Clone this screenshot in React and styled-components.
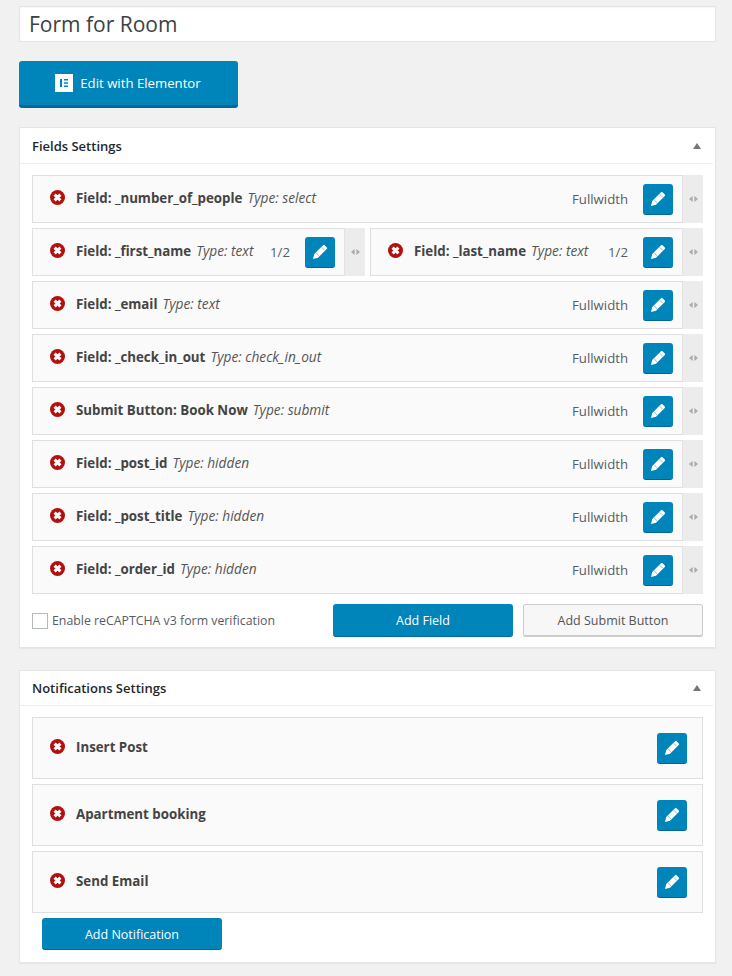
import React from "react";
import styled, { createGlobalStyle } from "styled-components";

const GlobalStyle = createGlobalStyle`
  html, body {
    margin: 0;
    padding: 0;
    background: #f1f1f1;
    font-family: "Open Sans", "Liberation Sans", sans-serif;
    font-size: 13px;
    color: #444;
  }
  * { box-sizing: border-box; }
`;

const Page = styled.div`
  width: 732px;
  height: 976px;
  overflow: hidden;
  padding: 6px 16px 0 19px;
`;

const TitleBox = styled.div`
  height: 36px;
  background: #fff;
  border: 1px solid #e4e4e4;
  box-shadow: inset 0 1px 2px rgba(0, 0, 0, 0.04);
  padding-left: 9px;
  font-size: 21px;
  line-height: 34px;
  color: #3c4146;
`;

const ElementorButton = styled.div`
  margin-top: 19px;
  width: 219px;
  height: 47px;
  background: #0085ba;
  border-bottom: 3px solid #006799;
  border-radius: 3px;
  display: flex;
  align-items: center;
  justify-content: center;
  gap: 7px;
  color: #fff;
  font-size: 13.2px;
  padding-bottom: 1px;
  padding-right: 1px;
`;

const Panel = styled.section`
  margin-top: ${(p) => p.$top}px;
  height: ${(p) => p.$height}px;
  background: #fff;
  border: 1px solid #e5e5e5;
  box-shadow: 0 1px 1px rgba(0, 0, 0, 0.04);
`;

const PanelHeader = styled.header`
  height: ${(p) => p.$height}px;
  margin-right: 2px;
  padding: 0 12px;
  display: flex;
  align-items: center;
  justify-content: space-between;
  border-bottom: 1px solid #eee;
  font-size: 13px;
  font-weight: 600;
  color: #23282d;
`;

const Caret = styled.span`
  width: 0;
  height: 0;
  margin-right: 0;
  border-left: 4px solid transparent;
  border-right: 4px solid transparent;
  border-bottom: 6px solid #72777c;
`;

const PanelBody = styled.div`
  padding: 11px 12px 0;
  display: flex;
  flex-direction: column;
  gap: ${(p) => p.$gap}px;
`;

const HalfRow = styled.div`
  display: grid;
  grid-template-columns: 333px 333px;
  gap: 5px;
`;

const FieldRow = styled.div`
  height: ${(p) => p.$height}px;
  background: #fafafa;
  border: 1px solid #dfdfdf;
  border-right: ${(p) => (p.$plain ? "1px solid #dfdfdf" : "0")};
  display: flex;
  align-items: center;
  padding-left: 17px;
`;

const ErrorIcon = styled.svg`
  width: 15px;
  height: 15px;
  flex: none;
  margin-top: -3px;
  margin-right: ${(p) => p.$space || 11}px;
`;

const FieldName = styled.strong`
  font-weight: 700;
  font-size: 13.3px;
  color: #444;
  margin-top: -3px;
  white-space: nowrap;
`;

const FieldType = styled.em`
  font-style: italic;
  font-size: 13.7px;
  color: #555;
  margin-top: -3px;
  margin-left: 5px;
  white-space: nowrap;
`;

const WidthLabel = styled.span`
  margin-left: auto;
  margin-right: 15px;
  font-size: 13.2px;
  color: #555d66;
`;

const EditButton = styled.div`
  width: 30px;
  height: 31px;
  flex: none;
  margin-right: ${(p) => p.$right}px;
  margin-left: ${(p) => (p.$auto ? "auto" : "0")};
  margin-top: ${(p) => (p.$auto ? "1px" : "0")};
  background: #0085ba;
  border-bottom: 1px solid #006799;
  border-radius: 3px;
  display: flex;
  align-items: center;
  justify-content: center;
`;

const Handle = styled.div`
  width: 21px;
  height: calc(100% + 2px);
  flex: none;
  background: #ececec;
  border-left: 1px solid #e2e2e2;
  color: #aaa;
  display: flex;
  align-items: center;
  justify-content: center;
`;

const Footer = styled.div`
  margin-top: 5px;
  display: flex;
  align-items: center;
`;

const CheckBox = styled.span`
  width: 16px;
  height: 16px;
  background: #fff;
  border: 1px solid #b4b9be;
  flex: none;
  margin-right: 4px;
`;

const CheckLabel = styled.span`
  font-size: 12.33px;
  color: #555d66;
  margin-right: auto;
`;

const ActionButton = styled.div`
  width: 180px;
  height: ${(p) => p.$height || 33}px;
  margin-left: ${(p) => p.$left || 0}px;
  padding-top: ${(p) => (p.$height ? 1 : 0)}px;
  border-radius: 3px;
  display: flex;
  align-items: center;
  justify-content: center;
  font-size: 12.5px;
  background: ${(p) => (p.$secondary ? "#f7f7f7" : "#0085ba")};
  color: ${(p) => (p.$secondary ? "#555" : "#fff")};
  border: ${(p) => (p.$secondary ? "1px solid #ccc" : "0")};
  border-bottom: ${(p) => (p.$secondary ? "2px solid #ccc" : "1px solid #006799")};
`;

const Error = ({ space }) => (
  <ErrorIcon viewBox="0 0 15 15" $space={space}>
    <circle cx="7.5" cy="7.5" r="7.5" fill="#b30f0f" />
    <path d="M4.6 4.6l5.8 5.8M10.4 4.6l-5.8 5.8" stroke="#fff" strokeWidth="3" />
  </ErrorIcon>
);

const Pencil = () => (
  <svg width="16" height="16" viewBox="0 0 16 16">
    <path d="M11 1.2c.5-.4 1.100-.4 1.500 0l2.300 2.300c.4.400.4 1 0 1.500L6 13.800 1 15l1.200-5z" fill="#fff" />
    <path d="M9.600 3.200l3.200 3.200M4.200 9l2.800 2.800" stroke="#4aa5cc" strokeWidth="0.7" />
  </svg>
);

const Arrows = () => (
  <svg width="9" height="6" viewBox="0 0 9 6">
    <path d="M0 3l3.600-3v6zM9 3l-3.600-3v6z" fill="#aaa" />
  </svg>
);

const Field = ({ name, type, width }) => (
  <FieldRow $height={48}>
    <Error />
    <FieldName>{name}</FieldName>
    <FieldType>Type: {type}</FieldType>
    <WidthLabel>{width}</WidthLabel>
    <EditButton $right={9}><Pencil /></EditButton>
    <Handle><Arrows /></Handle>
  </FieldRow>
);

const Notification = ({ name }) => (
  <FieldRow $height={62} $plain>
    <Error />
    <FieldName>{name}</FieldName>
    <EditButton $auto $right={15}><Pencil /></EditButton>
  </FieldRow>
);

const App = () => (
  <Page>
    <GlobalStyle />
    <TitleBox>Form for Room</TitleBox>
    <ElementorButton>
      <svg width="18" height="18" viewBox="0 0 18 18">
        <rect width="18" height="18" fill="#fff" />
        <path d="M5 5h2v8H5zM9 5h4v1.600H9zM9 8.200h4v1.600H9zM9 11.400h4V13H9z" fill="#0085ba" />
      </svg>
      Edit with Elementor
    </ElementorButton>

    <Panel $top={19} $height={521}>
      <PanelHeader $height={36}>
        Fields Settings
        <Caret />
      </PanelHeader>
      <PanelBody $gap={5}>
        <Field name="Field: _number_of_people" type="select" width="Fullwidth" />
        <HalfRow>
          <Field name="Field: _first_name" type="text" width="1/2" />
          <Field name="Field: _last_name" type="text" width="1/2" />
        </HalfRow>
        <Field name="Field: _email" type="text" width="Fullwidth" />
        <Field name="Field: _check_in_out" type="check_in_out" width="Fullwidth" />
        <Field name="Submit Button: Book Now" type="submit" width="Fullwidth" />
        <Field name="Field: _post_id" type="hidden" width="Fullwidth" />
        <Field name="Field: _post_title" type="hidden" width="Fullwidth" />
        <Field name="Field: _order_id" type="hidden" width="Fullwidth" />
        <Footer>
          <CheckBox />
          <CheckLabel>Enable reCAPTCHA v3 form verification</CheckLabel>
          <ActionButton>Add Field</ActionButton>
          <ActionButton $secondary $left={10}>Add Submit Button</ActionButton>
        </Footer>
      </PanelBody>
    </Panel>

    <Panel $top={22} $height={293}>
      <PanelHeader $height={35}>
        Notifications Settings
        <Caret />
      </PanelHeader>
      <PanelBody $gap={5}>
        <Notification name="Insert Post" />
        <Notification name="Apartment booking" />
        <Notification name="Send Email" />
        <ActionButton $left={10} $height={32}>Add Notification</ActionButton>
      </PanelBody>
    </Panel>
  </Page>
);

export default App;
